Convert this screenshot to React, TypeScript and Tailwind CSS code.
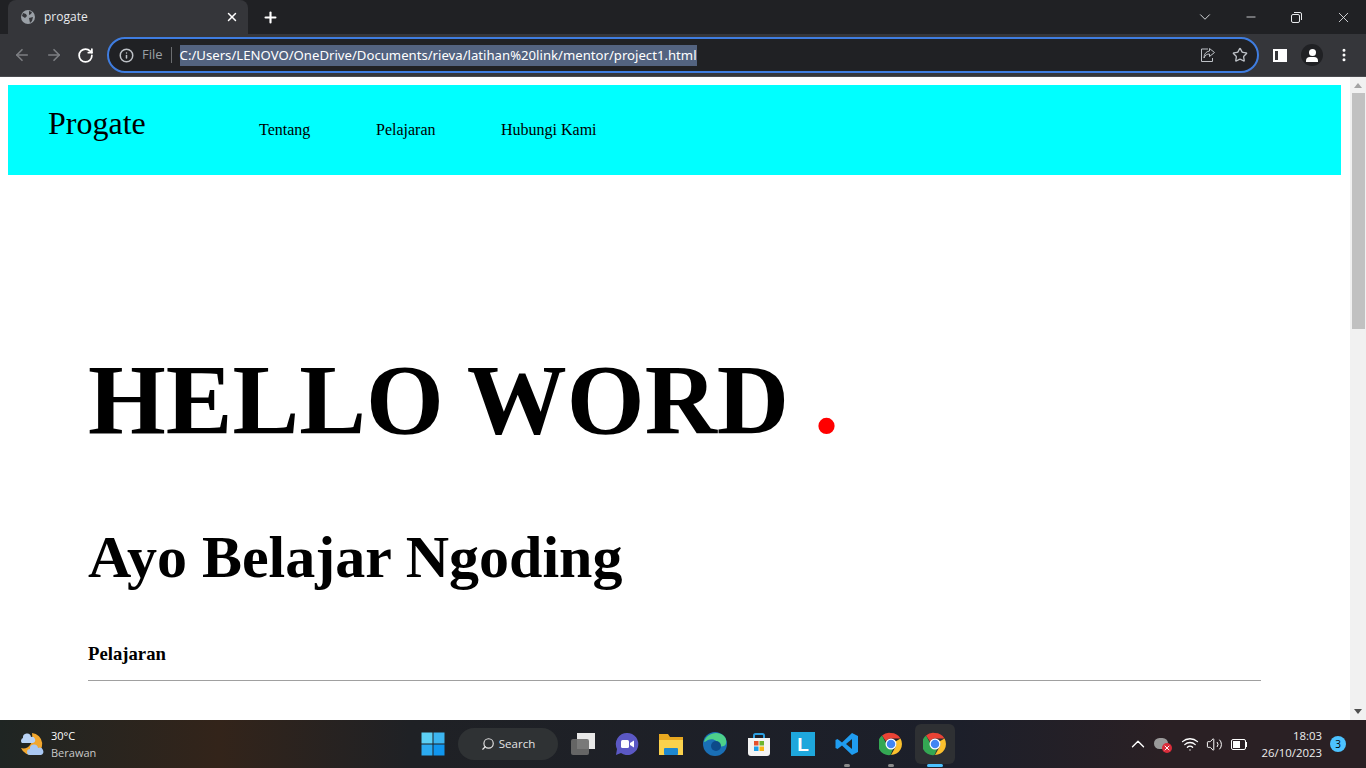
import React from "react";
import { ArrowLeft, ArrowRight, ChevronDown, ChevronUp, Info, Minus, MoreVertical, Plus, RotateCw, Search, Star, Volume2, Wifi, X } from "lucide-react";

const ChromeLogo = () => (
  <svg width="24" height="24" viewBox="0 0 48 48">
    <path d="M24 2a22 22 0 0 1 19 11H24a11 11 0 0 0-10 6L6 7a22 22 0 0 1 18-5z" fill="#ea4335" />
    <path d="M43 13a22 22 0 0 1-19 33l9-16a11 11 0 0 0 0-11z" fill="#fbc02d" />
    <path d="M6 7l9 17a11 11 0 0 0 13 10l-5 12A22 22 0 0 1 6 7z" fill="#34a853" />
    <circle cx="24" cy="24" r="11" fill="#fff" />
    <circle cx="24" cy="24" r="8.5" fill="#4285f4" />
  </svg>
);

const WeatherIcon = () => (
  <svg width="26" height="26" viewBox="0 0 26 26">
    <path d="M13 2a11 11 0 1 1-11 15c6 2 13-3 11-15z" fill="#f2a72e" />
    <path d="M3 12a3 3 0 0 1 1-5 4 4 0 0 1 8-1 3 3 0 0 1 2 6z" fill="#b9d3f5" />
    <path d="M11 24a3 3 0 0 1 0-6 4 4 0 0 1 8-1 3.500 3.500 0 0 1 3 7z" fill="#a9c8f2" />
  </svg>
);

const TaskIcon = ({ children, active }: { children: React.ReactNode; active?: string }) => (
  <div className="relative w-11 h-10 flex items-center justify-center">
    {children}
    {active && <div className={`absolute bottom-[-3px] h-[3px] rounded-full ${active}`} />}
  </div>
);

const App = () => {
  return (
    <div className="h-screen w-[1366px] flex flex-col overflow-hidden bg-white font-['Open_Sans',sans-serif]">
      {/* tab strip */}
      <div className="h-[34px] bg-[#202124] flex items-end shrink-0">
        <div className="ml-2 w-[240px] h-[34px] bg-[#35363a] rounded-t-lg flex items-center pl-[13px] pr-[9px] text-white">
          <svg width="14" height="14" viewBox="0 0 14 14">
            <circle cx="7" cy="7" r="7" fill="#9aa0a6" />
            <path d="M2 3l3 1 1 2-2 2-3-2zM8 1l3 1-1 2-2 1zM8 8l4-1-1 4-2 2z" fill="#35363a" />
          </svg>
          <span className="ml-[9px] text-xs text-[#e8eaed]">progate</span>
          <X className="ml-auto w-[14px] h-[14px] text-white" strokeWidth={2.5} />
        </div>
        <div className="w-[44px] h-[34px] flex items-center justify-center">
          <Plus className="w-[17px] h-[17px] text-white" strokeWidth={3} />
        </div>
        <div className="ml-auto h-[34px] flex items-center text-[#e8eaed]">
          <ChevronDown className="w-[18px] h-[18px] mr-[30px]" strokeWidth={1.2} />
          <Minus className="w-[14px] h-[14px] mr-[33px]" strokeWidth={1.4} />
          <svg width="11" height="11" viewBox="0 0 11 11" fill="none" stroke="currentColor" className="mr-[33px]">
            <rect x="0.500" y="2.500" width="8" height="8" rx="1.500" />
            <path d="M3 .5h6a1.500 1.500 0 0 1 1.500 1.500v6" />
          </svg>
          <X className="w-[17px] h-[17px] mr-[14px]" strokeWidth={1.2} />
        </div>
      </div>

      {/* toolbar */}
      <div className="h-[43px] bg-[#35363a] flex items-center shrink-0 border-b border-[#4a4b4f]">
        <ArrowLeft className="ml-[13px] w-[18px] h-[18px] text-[#7d7f83]" strokeWidth={2.2} />
        <ArrowRight className="ml-[14px] w-[18px] h-[18px] text-[#7d7f83]" strokeWidth={2.2} />
        <RotateCw className="ml-[14px] w-[17px] h-[17px] text-white" strokeWidth={2.5} />
        <div className="ml-[13px] w-[1152px] h-[36px] rounded-full border-2 border-[#3f7de0] bg-[#202124] flex items-center pl-[10px] pr-[9px]">
          <Info className="w-[15px] h-[15px] text-[#bdc1c6]" strokeWidth={2.4} />
          <span className="ml-[8px] text-[13px] text-[#9aa0a6]">File</span>
          <div className="ml-2 w-px h-4 bg-[#6b6d70]" />
          <span className="ml-[8px] h-[21px] leading-[21px] bg-[#536380] text-[13.16px] text-white font-['Noto_Sans',sans-serif] whitespace-nowrap">
            C:/Users/LENOVO/OneDrive/Documents/rieva/latihan%20link/mentor/project1.html
          </span>
          <svg width="16" height="16" viewBox="0 0 16 16" fill="none" stroke="#bdc1c6" className="ml-auto">
            <path d="M8 2H1.500v12.500h11V11" />
            <path d="M9.500 1.500l5 4-5 4V7C7 7 5 8 4 11c0-4 2-6.500 5.500-7z" />
          </svg>
          <Star className="ml-4 w-4 h-4 text-[#bdc1c6]" strokeWidth={2} />
        </div>
        <div className="ml-[14px] w-[14px] h-[13px] border-2 border-white flex justify-end">
          <div className="w-[7px] bg-white" />
        </div>
        <div className="ml-[14px] w-[22px] h-[22px] rounded-full bg-[#202124] flex flex-col items-center justify-center">
          <div className="w-[7px] h-[7px] rounded-full bg-white" />
          <div className="w-[12px] h-[5px] mt-px rounded-t-sm bg-white" />
        </div>
        <MoreVertical className="ml-[13px] w-4 h-4 text-white" strokeWidth={2.5} />
      </div>

      {/* page */}
      <div className="h-[643px] flex shrink-0 overflow-hidden">
        <div className="w-[1349px] p-2 font-['Liberation_Serif',serif] text-black overflow-hidden">
          <nav className="h-[90px] bg-[#00ffff] flex items-start pl-10">
            <h2 className="w-[211px] pt-[19px] text-[32px] leading-[39px] font-normal">Progate</h2>
            <a className="w-[117px] pt-[36px] text-base leading-[18px]">Tentang</a>
            <a className="w-[125px] pt-[36px] text-base leading-[18px]">Pelajaran</a>
            <a className="pt-[36px] text-base leading-[18px]">Hubungi Kami</a>
          </nav>
          <div className="px-20 pt-[167px]">
            <h1 className="text-[100px] leading-[115px] font-bold whitespace-nowrap">
              HELLO WORD <span className="text-[#ff0000]">.</span>
            </h1>
            <h2 className="mt-[66px] text-[60px] leading-[69px] font-bold">Ayo Belajar Ngoding</h2>
            <h4 className="mt-[51px] text-[18.72px] leading-[21px] font-bold">Pelajaran</h4>
            <hr className="mt-[16px] border-[#a0a0a0]" />
          </div>
        </div>
        <div className="ml-px w-4 bg-[#f1f1f1] flex flex-col items-center">
          <svg width="8" height="5" viewBox="0 0 8 5" className="mt-[6px]"><path d="M4 0l4 5H0z" fill="#a3a3a3" /></svg>
          <div className="mt-[5px] w-[13px] h-[236px] bg-[#c1c1c1]" />
          <svg width="8" height="5" viewBox="0 0 8 5" className="mt-auto mb-[6px]"><path d="M0 0h8L4 5z" fill="#505050" /></svg>
        </div>
      </div>

      {/* taskbar */}
      <div className="h-[48px] shrink-0 relative flex items-center bg-[linear-gradient(90deg,#1f2523_0%,#33241a_16%,#1f2125_30%,#1c1f2a_70%,#2a2024_85%,#2a2024_100%)] text-white">
        <div className="ml-[19px]"><WeatherIcon /></div>
        <div className="ml-[6px] text-[11px] leading-[17px]">
          <div>30°C</div>
          <div className="text-[#c8c8c8]">Berawan</div>
        </div>

        <div className="absolute left-[411px] top-[4px] flex items-center">
          <TaskIcon>
            <svg width="24" height="24" viewBox="0 0 24 24">
              <rect x="0.500" y="0.500" width="11" height="11" fill="#5cd0f5" />
              <rect x="12.500" y="0.500" width="11" height="11" fill="#3cb5f0" />
              <rect x="0.500" y="12.500" width="11" height="11" fill="#2cabf0" />
              <rect x="12.500" y="12.500" width="11" height="11" fill="#1096ee" />
            </svg>
          </TaskIcon>
          <div className="ml-[3px] w-[100px] h-8 rounded-full bg-[#2f3234] flex items-center justify-center gap-1 text-[11.5px] text-[#e4e4e4]">
            <Search className="w-[14px] h-[14px] -scale-x-100" />
            <span>Search</span>
          </div>
          <div className="ml-[3px] flex items-center">
            <TaskIcon>
              <div className="relative w-6 h-[22px]">
                <div className="absolute right-0 top-0 w-[18px] h-[16px] bg-[#e8e8e8]" />
                <div className="absolute left-0 bottom-0 w-[18px] h-[16px] rounded-[2px] bg-[#6d6d6d]/90" />
              </div>
            </TaskIcon>
            <TaskIcon>
              <svg width="24" height="24" viewBox="0 0 24 24">
                <path d="M12 1a11 11 0 1 1-6 20l-5 2 1-6A11 11 0 0 1 12 1z" fill="#5b58c4" />
                <rect x="6" y="8" width="8" height="8" rx="1.500" fill="#fff" />
                <path d="M15 11l4-2.500v7L15 13z" fill="#fff" />
              </svg>
            </TaskIcon>
            <TaskIcon>
              <svg width="24" height="24" viewBox="0 0 24 24">
                <path d="M0 2h9l2 3h13v18H0z" fill="#e8a820" />
                <path d="M0 8h24v15H0z" fill="#fbd24d" />
                <rect x="5" y="16" width="14" height="7" rx="1" fill="#1e88d0" />
              </svg>
            </TaskIcon>
            <TaskIcon>
              <svg width="24" height="24" viewBox="0 0 24 24">
                <circle cx="12" cy="12" r="12" fill="#1a6fb5" />
                <path d="M1 10C3 2 14-2 21 4c3 3 3 8 0 10-3 1-7 0-7-3 0-3-5-5-9-3-2 1-3 2-4 2z" fill="#4dd08a" />
                <circle cx="13" cy="14" r="5" fill="#0d4a8a" />
              </svg>
            </TaskIcon>
            <TaskIcon>
              <svg width="24" height="24" viewBox="0 0 24 24">
                <path d="M7 7V3.500a1.500 1.500 0 0 1 1.500-1.500h7A1.500 1.500 0 0 1 17 3.500V7" fill="none" stroke="#2d9fe0" strokeWidth="2" />
                <path d="M1 6h22v15a3 3 0 0 1-3 3H4a3 3 0 0 1-3-3z" fill="#f3f3f3" />
                <rect x="7" y="9" width="4.500" height="4.500" fill="#e5512d" />
                <rect x="12.500" y="9" width="4.500" height="4.500" fill="#6cb52d" />
                <rect x="7" y="14.500" width="4.500" height="4.500" fill="#1b9ee8" />
                <rect x="12.500" y="14.500" width="4.500" height="4.500" fill="#f8b513" />
              </svg>
            </TaskIcon>
            <TaskIcon>
              <div className="w-6 h-6 bg-[#1ea7dc] flex items-center justify-center text-white text-[19px] font-bold leading-none font-['Liberation_Sans',sans-serif]">L</div>
            </TaskIcon>
            <TaskIcon active="w-[6px] bg-[#8a8a8a]">
              <svg width="24" height="24" viewBox="0 0 24 24">
                <path d="M17 1l6 3v16l-6 3-10-9.500L2.500 17 .5 16v-8l2-1L7 10.500z" fill="#1f9cf0" />
                <path d="M17 7l-6 5 6 5z" fill="#202326" />
              </svg>
            </TaskIcon>
            <TaskIcon active="w-[6px] bg-[#8a8a8a]"><ChromeLogo /></TaskIcon>
            <div className="mx-[2px] w-10 flex justify-center rounded-md bg-[#2e3033]">
              <TaskIcon active="w-[16px] bg-[#4cc2ff]"><ChromeLogo /></TaskIcon>
            </div>
          </div>
        </div>

        <div className="ml-auto flex items-center text-white">
          <ChevronUp className="w-[22px] h-[22px]" strokeWidth={1.5} />
          <div className="relative ml-[5px] w-[17px] h-[13px]">
            <div className="w-[14px] h-[11px] rounded-full bg-[#9a9a9a]" />
            <div className="absolute right-[-1px] bottom-[-2px] w-[10px] h-[10px] rounded-full bg-[#d92c3a] flex items-center justify-center">
              <X className="w-[8px] h-[8px]" strokeWidth={3} />
            </div>
          </div>
          <Wifi className="ml-[10px] w-[18px] h-[18px]" strokeWidth={1.7} />
          <Volume2 className="ml-[7px] w-[17px] h-[17px]" strokeWidth={1.4} />
          <div className="ml-[8px] flex items-center">
            <div className="w-[15px] h-[11px] border border-white rounded-[2px] p-px">
              <div className="w-[7px] h-full bg-white" />
            </div>
            <div className="w-px h-[5px] bg-white" />
          </div>
          <div className="ml-[15px] text-[11.4px] leading-[17px] text-right text-[#eeeeee]">
            <div>18:03</div>
            <div>26/10/2023</div>
          </div>
          <div className="ml-2 mr-[20px] w-4 h-4 rounded-full bg-[#4cc2ff] text-black text-[10px] flex items-center justify-center">3</div>
        </div>
      </div>
    </div>
  );
};

export default App;
